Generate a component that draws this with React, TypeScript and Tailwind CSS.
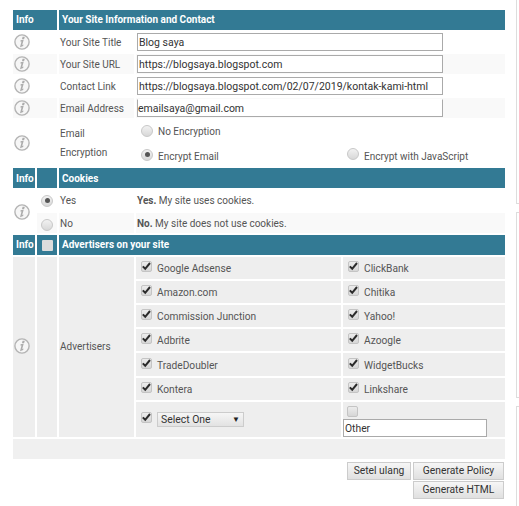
const InfoIcon = () => (
  <svg width="16" height="16" viewBox="0 0 16 16" className="ml-px block" fill="none">
    <circle cx="8" cy="8" r="7.1" stroke="#b4b4b4" strokeWidth="1.4" fill="#f6f6f6" />
    <path d="M8.6 2.8 L10.8 2.8 L10.1 4.9 L8 4.9 Z" fill="#acacac" />
    <path d="M6.6 6.2 L9.8 5.6 L8.2 11 L9.4 10.6 L9.2 12 L6 13.2 L7.5 7.4 L6.4 7.4 Z" fill="#acacac" />
  </svg>
);

const Radio = ({ checked = false }: { checked?: boolean }) => (
  <span className="inline-flex h-3 w-3 shrink-0 items-center justify-center rounded-full border border-[#c8c8c8] bg-gradient-to-b from-[#f2f2f2] to-[#d8d8d8]">
    {checked && <span className="h-[5px] w-[5px] rounded-full bg-[#555]" />}
  </span>
);

const Check = ({ checked = true }: { checked?: boolean }) => (
  <span className="inline-flex h-[11px] w-[11px] shrink-0 items-center justify-center rounded-[2px] border border-[#c4c4c4] bg-gradient-to-b from-[#ececec] to-[#d6d6d6]">
    {checked && (
      <svg width="9" height="9" viewBox="0 0 9 9" fill="none">
        <path d="M0.8 4.4 L3.2 6.8 L8 1" stroke="#2b2b2b" strokeWidth="2" />
      </svg>
    )}
  </span>
);

const Header = ({ title, box, split, raised }: { title: string; box?: boolean; split?: boolean; raised?: boolean }) => (
  <tr className={`h-5 bg-[#337a94] text-[10px] font-bold text-white ${raised ? "leading-[13px]" : ""}`}>
    {split ? (
      <>
        <td className={`pl-[3px] ${raised ? "pb-px" : ""}`}>Info</td>
        <td className="text-center">{box && <span className="mx-auto block h-[11px] w-[11px] rounded-[1px] bg-[#dcdcdc]" />}</td>
      </>
    ) : (
      <td colSpan={2} className={`pl-[3px] ${raised ? "pb-px" : ""}`}>Info</td>
    )}
    <td colSpan={3} className={`pl-[3px] ${raised ? "pb-px" : ""}`}>{title}</td>
  </tr>
);

const TextRow = ({ label, value, alt, flat }: { label: string; value: string; alt?: boolean; flat?: boolean }) => (
  <tr className={alt ? "h-5 bg-[#f9f9f9]" : "h-5"}>
    <td colSpan={2}><InfoIcon /></td>
    <td className="pl-[1px]">{label}</td>
    <td colSpan={2} className="p-0">
      <input
        readOnly
        value={value}
        className={`ml-[1px] block h-[18px] w-[306px] border border-[#aaa] bg-white text-[10.5px] text-[#333] outline-none ${flat ? "border-t-white" : "pl-[1px]"}`}
      />
    </td>
  </tr>
);

const ads = [
  ["Google Adsense", "ClickBank"],
  ["Amazon.com", "Chitika"],
  ["Commission Junction", "Yahoo!"],
  ["Adbrite", "Azoogle"],
  ["TradeDoubler", "WidgetBucks"],
  ["Kontera", "Linkshare"],
];

const AdCell = ({ name }: { name: string }) => (
  <td className="bg-[#eee] pl-[5px] align-middle">
    <div className="flex items-center gap-[5px]">
      <span className="-mt-[3px] flex"><Check /></span>
      <span className="mt-[2px] text-[10.2px] leading-4">{name}</span>
    </div>
  </td>
);

const buttonClass =
  "flex h-[18px] items-center justify-center border border-[#ccc] bg-gradient-to-b from-[#f6f6f6] to-[#e0e0e0] text-[10.3px] text-[#333]";

export default function App() {
  return (
    <div className="flex h-[506px] w-[519px] overflow-hidden bg-white font-['Roboto',sans-serif] text-[10px] text-[#555]">
      <div className="w-[516px] pl-[11px] pt-2">
        <table className="table-fixed border-separate border-spacing-[2px]" style={{ width: 496 }}>
          <colgroup>
            <col className="w-[22px]" />
            <col className="w-[20px]" />
            <col className="w-[75px]" />
            <col className="w-[205px]" />
            <col className="w-[162px]" />
          </colgroup>
          <tbody>
            <Header title="Your Site Information and Contact" raised />
            <TextRow label="Your Site Title" value="Blog saya" />
            <TextRow label="Your Site URL" value="https://blogsaya.blogspot.com" alt />
            <TextRow label="Contact Link" value="https://blogsaya.blogspot.com/02/07/2019/kontak-kami-html" />
            <TextRow label="Email Address" value="emailsaya@gmail.com" alt flat />
            <tr className="h-[46px]">
              <td colSpan={2}><InfoIcon /></td>
              <td className="pl-[1px] leading-[19px]">Email<br />Encryption</td>
              <td className="pl-[5px]">
                <div className="flex flex-col gap-[11px] pt-[2px] leading-[14px]">
                  <div className="flex items-center gap-[5px]"><span className="-mt-[2px] flex"><Radio /></span><span>No Encryption</span></div>
                  <div className="flex items-center gap-[5px]"><span className="-mt-[4px] flex"><Radio checked /></span><span>Encrypt Email</span></div>
                </div>
              </td>
              <td className="pb-[2px] pl-[4px] align-bottom leading-[14px]">
                <div className="flex items-center gap-[5px]"><span className="-mt-[6px] flex"><Radio /></span><span>Encrypt with JavaScript</span></div>
              </td>
            </tr>

            <Header title="Cookies" split />
            <tr className="h-[21px]">
              <td rowSpan={2}><InfoIcon /></td>
              <td><div className="flex justify-center"><Radio checked /></div></td>
              <td className="pl-[1px]">Yes</td>
              <td colSpan={2} className="pl-[1px]"><b className="font-bold">Yes.</b> My site uses cookies.</td>
            </tr>
            <tr className="h-5">
              <td className="bg-[#f9f9f9]"><div className="mt-[4px] flex justify-center"><Radio /></div></td>
              <td className="bg-[#f9f9f9] pl-[1px]">No</td>
              <td colSpan={2} className="bg-[#f9f9f9] pl-[1px]"><b className="font-bold">No.</b> My site does not use cookies.</td>
            </tr>

            <Header title="Advertisers on your site" split box raised />
            {ads.map(([left, right], i) => (
              <tr key={left} className={i === 4 ? "h-[23px]" : "h-[22px]"}>
                {i === 0 && (
                  <>
                    <td rowSpan={7} className="bg-[#eee] pb-[2px]"><InfoIcon /></td>
                    <td rowSpan={7} className="bg-[#eee]" />
                    <td rowSpan={7} className="bg-[#eee] pb-[2px] pl-[1px]">Advertisers</td>
                  </>
                )}
                <AdCell name={left} />
                <AdCell name={right} />
              </tr>
            ))}
            <tr className="h-[35px]">
              <td className="bg-[#eee] pl-[5px]">
                <div className="flex items-center gap-[5px]">
                  <span className="-mt-[5px] flex"><Check /></span>
                  <div className="flex h-[15px] w-[87px] items-center justify-between border border-[#ccc] bg-gradient-to-b from-[#f6f6f6] to-[#e2e2e2] pl-[3px] pr-[3px] text-[10.4px] text-[#333]">
                    <span>Select One</span>
                    <span className="text-[8px] text-[#222]">▼</span>
                  </div>
                </div>
              </td>
              <td className="bg-[#eee] p-0 align-bottom">
                <div className="mb-[2px] ml-[4px] flex"><Check checked={false} /></div>
                <input
                  readOnly
                  value="Other"
                  className="block h-[18px] w-[144px] border border-[#aaa] bg-white pl-[1px] text-[10.3px] text-[#333] outline-none"
                />
              </td>
            </tr>
            <tr className="h-5 bg-[#f0f0f0]">
              <td colSpan={5} />
            </tr>
          </tbody>
        </table>

        <div className="mt-px flex justify-end gap-[2px] pr-[12px]">
          <button className={`${buttonClass} w-[64px]`}>Setel ulang</button>
          <div className="flex w-[91px] flex-col gap-px">
            <button className={buttonClass}>Generate Policy</button>
            <button className={buttonClass}>Generate HTML</button>
          </div>
        </div>
      </div>

      <div className="flex w-[3px] flex-col gap-2">
        <div className="h-[204px] border-b border-l border-[#ddd]" />
        <div className="h-[186px] border-y border-l border-[#ddd]" />
        <div className="flex-1 border-t border-l border-[#ddd]" />
      </div>
    </div>
  );
}
